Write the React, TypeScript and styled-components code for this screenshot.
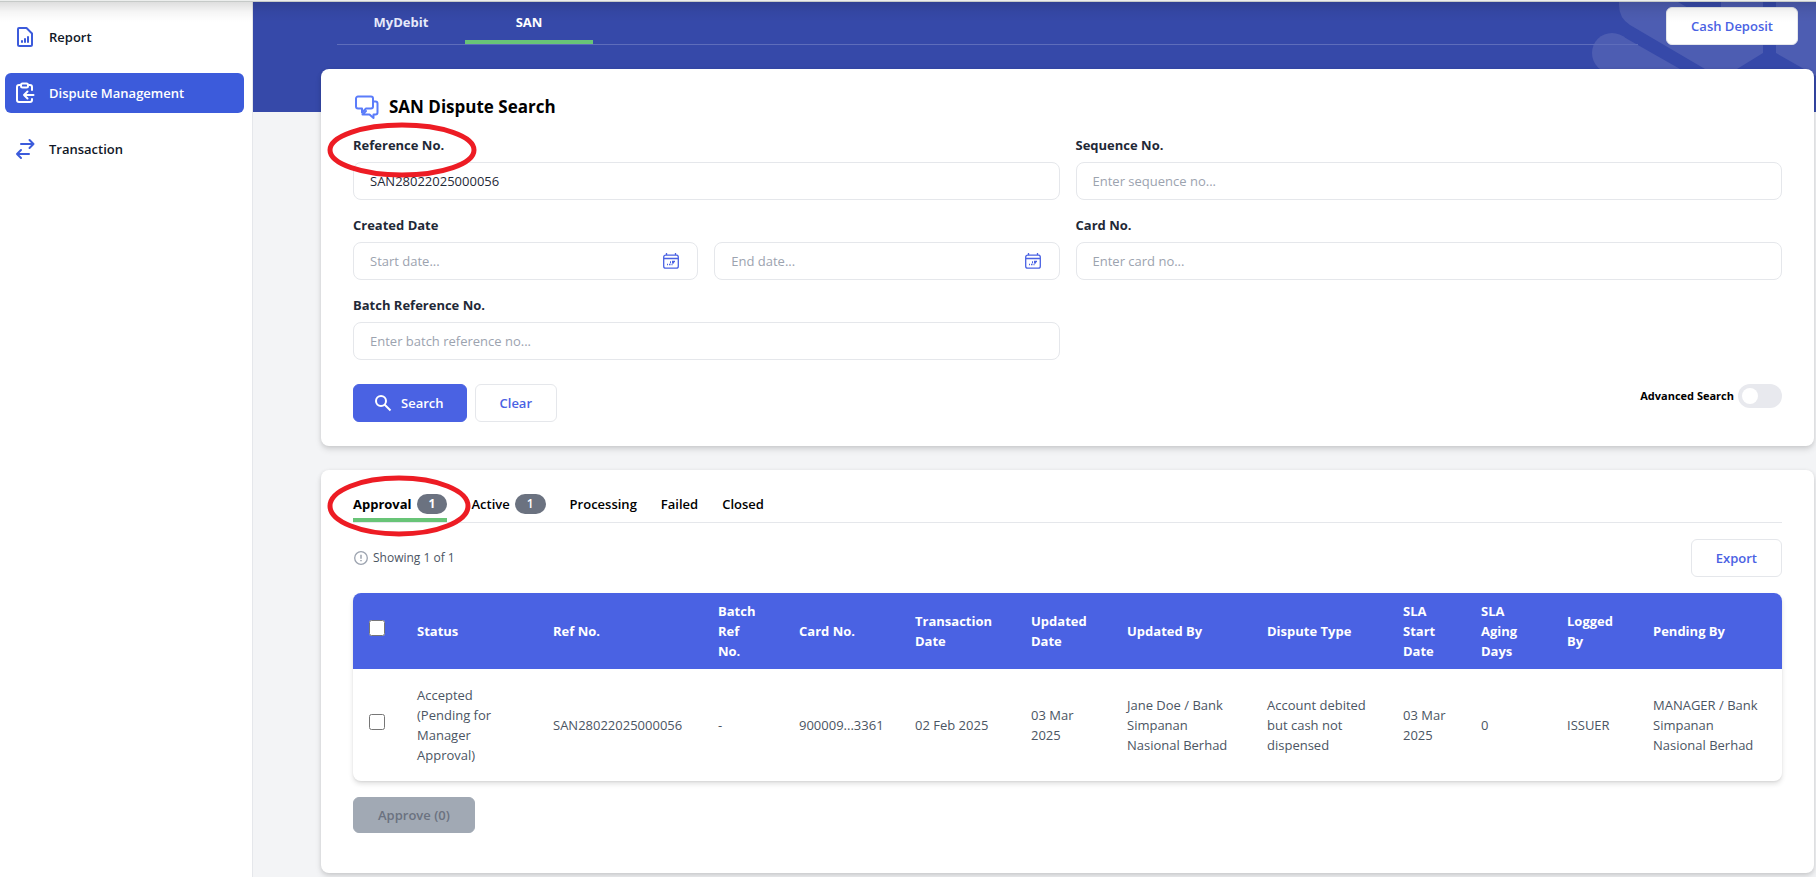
import React, { useId, useState } from 'react';
import styled, { createGlobalStyle, css } from 'styled-components';

const color = {
  brand: '#4a62e3',
  nav: '#3c5bdb',
  banner: '#3649a9',
  green: '#68c477',
  line: '#e5e7eb',
  page: '#f3f4f6',
  text: '#1f2937',
  muted: '#9ca3af',
};

const GlobalStyle = createGlobalStyle`
  *, *::before, *::after { box-sizing: border-box; }
  body {
    margin: 0;
    border-top: 1px solid #eceeed;
    background: ${color.page};
    color: #000;
    font-family: 'Segoe UI', 'Open Sans', 'Noto Sans', sans-serif;
    font-size: 13px;
    line-height: 20px;
  }
  button, input { font: inherit; color: inherit; }
`;

const Shell = styled.div`
  display: flex;
  min-height: calc(100vh - 1px);
  border-top: 1px solid #c6cac8;
  position: relative;
`;

const TopShade = styled.div`
  position: absolute;
  inset: 0 0 auto;
  height: 20px;
  background: linear-gradient(rgba(0, 0, 0, 0.13), rgba(0, 0, 0, 0.04) 50%, transparent);
  pointer-events: none;
`;

const Sidebar = styled.nav`
  flex: 0 0 253px;
  display: flex;
  flex-direction: column;
  gap: 16px;
  padding: 15px 8px 15px 5px;
  background: #fff;
  border-right: 1px solid ${color.line};
`;

const NavLink = styled.a<{ $active?: boolean }>`
  display: flex;
  align-items: center;
  gap: 12px;
  height: 40px;
  padding: 0 8px;
  border-radius: 6px;
  font-weight: 600;
  text-decoration: none;
  color: ${(p) => (p.$active ? '#fff' : '#111827')};
  background: ${(p) => (p.$active ? color.nav : 'transparent')};
  svg { color: ${(p) => (p.$active ? '#fff' : color.nav)}; }
`;

const Main = styled.main`
  flex: 1;
  min-width: 0;
  position: relative;
  padding: 0 2px 4px 68px;
`;

const Banner = styled.div`
  position: absolute;
  inset: 0 0 auto;
  height: 110px;
  overflow: hidden;
  background: ${color.banner};
  svg { position: absolute; right: 0; top: 0; }
`;

const TopBar = styled.div`
  position: relative;
  display: flex;
  align-items: flex-start;
  gap: 28px;
  height: 67px;
  padding: 0 16px;
`;

const TopTabs = styled.div`
  flex: 1;
  display: flex;
  border-bottom: 1px solid #5e6dbb;
`;

const TopTab = styled.button<{ $active?: boolean }>`
  width: 128px;
  height: 42px;
  padding: 2px 0 0;
  border: 0;
  border-bottom: 4px solid ${(p) => (p.$active ? color.green : 'transparent')};
  background: none;
  color: ${(p) => (p.$active ? '#fff' : '#e7eafa')};
  font-weight: 700;
`;

const Button = styled.button<{ $kind?: 'primary' | 'disabled' }>`
  display: inline-flex;
  align-items: center;
  justify-content: center;
  gap: 8px;
  height: 38px;
  padding: 0 24px;
  border: 1px solid ${color.line};
  border-radius: 6px;
  background: #fff;
  color: ${color.brand};
  font-weight: 600;
  ${(p) => p.$kind === 'primary' && css`
    padding: 0 22px 0 19px;
    border-color: ${color.brand};
    background: ${color.brand};
    color: #fff;
  `}
  ${(p) => p.$kind === 'disabled' && css`
    height: 36px;
    border-color: #a1a9b4;
    background: #a1a9b4;
    color: #6b7280;
  `}
`;

const CashButton = styled(Button)`
  margin-top: 5px;
`;

const Card = styled.section`
  position: relative;
  padding: 0 32px;
  border-radius: 8px;
  background: #fff;
  box-shadow: 0 4px 6px rgba(0, 0, 0, 0.1), 0 1px 4px rgba(0, 0, 0, 0.1);
  & + & { margin-top: 24px; }
`;

const SearchCard = styled(Card)`
  padding-top: 24px;
  padding-bottom: 24px;
`;

const ResultCard = styled(Card)`
  margin-top: 24px;
  padding-top: 20px;
  padding-bottom: 40px;
`;

const Title = styled.h1`
  display: flex;
  align-items: center;
  gap: 9px;
  height: 28px;
  margin: 0 0 14px;
  font-size: 17px;
  font-weight: 700;
  line-height: 28px;
  svg { color: #5b7cfa; }
`;

const Fields = styled.div`
  display: grid;
  grid-template-columns: repeat(2, minmax(0, 1fr));
  gap: 15px 16px;
`;

const Field = styled.div`
  display: flex;
  flex-direction: column;
  gap: 7px;
`;

const Label = styled.label`
  font-weight: 700;
  color: ${color.text};
`;

const InputBox = styled.input`
  width: 100%;
  height: 38px;
  padding: 0 16px;
  border: 1px solid ${color.line};
  border-radius: 8px;
  background: #fff;
  color: ${color.text};
  &::placeholder { color: ${color.muted}; opacity: 1; }
`;

const DateRow = styled.div`
  display: grid;
  grid-template-columns: repeat(2, minmax(0, 1fr));
  gap: 16px;
`;

const DateBox = styled.div`
  position: relative;
  svg {
    position: absolute;
    right: 18px;
    top: 10px;
    color: ${color.brand};
  }
`;

const Actions = styled.div`
  display: flex;
  align-items: flex-start;
  gap: 8px;
  margin-top: 24px;
`;

const Advanced = styled.label`
  display: flex;
  align-items: center;
  gap: 4px;
  margin-left: auto;
  font-size: 11px;
  font-weight: 700;
`;

const Toggle = styled.input`
  appearance: none;
  width: 44px;
  height: 24px;
  margin: 0;
  padding: 4px;
  border-radius: 12px;
  background: #e8e9ee;
  &::before {
    content: '';
    display: block;
    width: 16px;
    height: 16px;
    border-radius: 50%;
    background: #fff;
  }
  &:checked { background: ${color.brand}; }
  &:checked::before { margin-left: 20px; }
`;

const Tabs = styled.div`
  display: flex;
  gap: 24px;
  border-bottom: 1px solid ${color.line};
`;

const Tab = styled.button<{ $active?: boolean }>`
  display: flex;
  align-items: center;
  gap: 5px;
  height: 32px;
  padding: 0;
  border: 0;
  border-bottom: 4px solid ${(p) => (p.$active ? color.green : 'transparent')};
  background: none;
  font-weight: ${(p) => (p.$active ? 700 : 600)};
`;

const Count = styled.span`
  padding: 0 12px;
  border-radius: 10px;
  background: #6b7280;
  color: #fff;
  font-size: 12px;
`;

const Toolbar = styled.div`
  display: flex;
  align-items: center;
  justify-content: space-between;
  margin: 16px 0;
`;

const Showing = styled.span`
  display: flex;
  align-items: center;
  gap: 4px;
  font-size: 12px;
  color: #4b5563;
  svg { color: ${color.muted}; }
`;

const TableFrame = styled.div`
  border-radius: 8px;
  overflow: hidden;
  box-shadow: 0 3px 5px rgba(0, 0, 0, 0.12), 0 1px 2px rgba(0, 0, 0, 0.06);
`;

const Table = styled.table`
  width: 100%;
  table-layout: fixed;
  border-collapse: collapse;
  text-align: left;
  th {
    height: 76px;
    padding: 8px 20px 8px 16px;
    background: ${color.brand};
    color: #fff;
    font-weight: 700;
  }
  td {
    height: 112px;
    padding: 16px;
    color: #4b5563;
  }
`;

const Check = styled.input`
  display: block;
  width: 16px;
  height: 16px;
  margin: 0 0 6px;
`;

const Footer = styled.div`
  display: flex;
  margin-top: 16px;
`;

const Mark = styled.svg<{ $left: number; $top: number }>`
  position: absolute;
  left: ${(p) => p.$left}px;
  top: ${(p) => p.$top}px;
  pointer-events: none;
  z-index: 2;
`;

const stroke = {
  fill: 'none',
  stroke: 'currentColor',
  strokeWidth: 2,
  strokeLinecap: 'round',
  strokeLinejoin: 'round',
} as const;

const ReportIcon = () => (
  <svg width="24" height="24" viewBox="0 0 24 24" {...stroke}>
    <path d="M6 3h7.500L19 8.500V19.500a1.500 1.500 0 0 1-1.500 1.500h-11A1.500 1.500 0 0 1 5 19.500V4a1 1 0 0 1 1-1z" />
    <path d="M9 17v-1M12 17v-3M15 17v-5" />
  </svg>
);

const DisputeIcon = () => (
  <svg width="24" height="24" viewBox="0 0 24 24" {...stroke}>
    <rect x="8" y="2.500" width="7" height="4" rx="1.500" />
    <path d="M8 4H6a2 2 0 0 0-2 2v13a2 2 0 0 0 2 2h11a2 2 0 0 0 2-2v-1" />
    <path d="M15 4h2a2 2 0 0 1 2 2v3" />
    <path d="M20.500 14H11M14.500 10.500L11 14l3.500 3.500" />
  </svg>
);

const TransferIcon = () => (
  <svg width="24" height="24" viewBox="0 0 24 24" {...stroke}>
    <path d="M8 7h12.500M16.500 3l4 4-4 4M16 17H4M8 13l-4 4 4 4" />
  </svg>
);

const ChatIcon = () => (
  <svg width="27" height="26" viewBox="0 0 27 26" {...stroke}>
    <path d="M5 2.500h13a2 2 0 0 1 2 2v8a2 2 0 0 1-2 2h-5l-4 4v-4H5a2 2 0 0 1-2-2v-8a2 2 0 0 1 2-2z" />
    <path d="M20.500 7.500h2a2 2 0 0 1 2 2v9a2 2 0 0 1-2 2H20.500v3.500l-4-3.500h-7l3.500-3.500" />
  </svg>
);

const CalendarIcon = () => (
  <svg width="18" height="18" viewBox="0 0 18 18" fill="none" stroke="currentColor" strokeWidth="1.300">
    <rect x="1.700" y="3.200" width="14.600" height="13" rx="2" />
    <path d="M2 6.500h14M4.500 1v2M13.500 1v2" />
    <path d="M5 12.500h1M8 10.700h1M10 9.500h3M7 12.500h1.500M9.500 12.500h1M10 10.900h2M8 9.900h1" />
  </svg>
);

const SearchIcon = () => (
  <svg width="20" height="20" viewBox="0 0 20 20" fill="none" stroke="currentColor" strokeWidth="2">
    <circle cx="8" cy="8" r="5" />
    <path d="M11.500 11.500L17.500 17.500" />
  </svg>
);

const InfoIcon = () => (
  <svg width="16" height="16" viewBox="0 0 16 16" fill="none" stroke="currentColor" strokeWidth="1.300">
    <circle cx="8" cy="8" r="6.300" />
    <path d="M8 4.800v4M8 10v1.300" strokeWidth="1.500" />
  </svg>
);

const BannerArt = () => (
  <svg width="240" height="110" viewBox="0 0 240 110" fill="#4d5db2">
    <path d="M43 -10V3Q43 16 54 23L129 67H161L187 51V-10H145V25L102 0L85 -10z" />
    <path d="M200 -10V51L228 67L240 74V-10z" />
    <circle cx="36" cy="51" r="20" />
    <path d="M46 34L104 67V71H36V51z" />
  </svg>
);

type TextFieldProps = { label: string; placeholder?: string; defaultValue?: string };

const TextField = ({ label, placeholder, defaultValue }: TextFieldProps) => {
  const id = useId();
  return (
    <Field>
      <Label htmlFor={id}>{label}</Label>
      <InputBox id={id} type="text" placeholder={placeholder} defaultValue={defaultValue} />
    </Field>
  );
};

const columns: { title: string; value: string; width: number }[] = [
  { title: 'Status', value: 'Accepted (Pending for Manager Approval)', width: 136 },
  { title: 'Ref No.', value: 'SAN28022025000056', width: 165 },
  { title: 'Batch Ref No.', value: '-', width: 81 },
  { title: 'Card No.', value: '900009...3361', width: 116 },
  { title: 'Transaction Date', value: '02 Feb 2025', width: 116 },
  { title: 'Updated Date', value: '03 Mar 2025', width: 96 },
  { title: 'Updated By', value: 'Jane Doe / Bank Simpanan Nasional Berhad', width: 140 },
  { title: 'Dispute Type', value: 'Account debited but cash not dispensed', width: 136 },
  { title: 'SLA Start Date', value: '03 Mar 2025', width: 78 },
  { title: 'SLA Aging Days', value: '0', width: 86 },
  { title: 'Logged By', value: 'ISSUER', width: 86 },
  { title: 'Pending By', value: 'MANAGER / Bank Simpanan Nasional Berhad', width: 145 },
];

const Col = styled.col<{ $width: number }>`
  width: ${(p) => p.$width}px;
`;

const resultTabs = [
  { name: 'Approval', count: 1 },
  { name: 'Active', count: 1 },
  { name: 'Processing' },
  { name: 'Failed' },
  { name: 'Closed' },
];

export default function App() {
  const [tab, setTab] = useState('Approval');
  return (
    <>
      <GlobalStyle />
      <Shell>
        <Sidebar>
          <NavLink href="#report"><ReportIcon />Report</NavLink>
          <NavLink href="#dispute" $active><DisputeIcon />Dispute Management</NavLink>
          <NavLink href="#transaction"><TransferIcon />Transaction</NavLink>
        </Sidebar>
        <Main>
          <Banner><BannerArt /></Banner>
          <TopBar>
            <TopTabs>
              <TopTab type="button">MyDebit</TopTab>
              <TopTab type="button" $active>SAN</TopTab>
            </TopTabs>
            <CashButton type="button">Cash Deposit</CashButton>
          </TopBar>

          <SearchCard>
            <Mark $left={5} $top={52} width="152" height="58" viewBox="0 0 152 58">
              <ellipse cx="76" cy="29" rx="72" ry="25" fill="none" stroke="#ed1c24" strokeWidth="5" />
            </Mark>
            <Title><ChatIcon />SAN Dispute Search</Title>
            <Fields>
              <TextField label="Reference No." defaultValue="SAN28022025000056" />
              <TextField label="Sequence No." placeholder="Enter sequence no..." />
              <Field>
                <Label htmlFor="start-date">Created Date</Label>
                <DateRow>
                  <DateBox>
                    <InputBox id="start-date" type="text" placeholder="Start date..." />
                    <CalendarIcon />
                  </DateBox>
                  <DateBox>
                    <InputBox aria-label="End date" type="text" placeholder="End date..." />
                    <CalendarIcon />
                  </DateBox>
                </DateRow>
              </Field>
              <TextField label="Card No." placeholder="Enter card no..." />
              <TextField label="Batch Reference No." placeholder="Enter batch reference no..." />
            </Fields>
            <Actions>
              <Button type="button" $kind="primary"><SearchIcon />Search</Button>
              <Button type="button">Clear</Button>
              <Advanced>
                Advanced Search
                <Toggle type="checkbox" />
              </Advanced>
            </Actions>
          </SearchCard>

          <ResultCard>
            <Mark $left={5} $top={5} width="146" height="62" viewBox="0 0 146 62">
              <ellipse cx="73" cy="31" rx="69" ry="28" fill="none" stroke="#ed1c24" strokeWidth="5" />
            </Mark>
            <Tabs>
              {resultTabs.map((t) => (
                <Tab key={t.name} type="button" $active={t.name === tab} onClick={() => setTab(t.name)}>
                  {t.name}
                  {t.count !== undefined && <Count>{t.count}</Count>}
                </Tab>
              ))}
            </Tabs>
            <Toolbar>
              <Showing><InfoIcon />Showing 1 of 1</Showing>
              <Button type="button">Export</Button>
            </Toolbar>
            <TableFrame>
              <Table>
                <colgroup>
                  <Col $width={48} />
                  {columns.map((c) => <Col key={c.title} $width={c.width} />)}
                </colgroup>
                <thead>
                  <tr>
                    <th><Check type="checkbox" aria-label="Select all" /></th>
                    {columns.map((c) => <th key={c.title}>{c.title}</th>)}
                  </tr>
                </thead>
                <tbody>
                  <tr>
                    <td><Check type="checkbox" aria-label="Select row" /></td>
                    {columns.map((c) => <td key={c.title}>{c.value}</td>)}
                  </tr>
                </tbody>
              </Table>
            </TableFrame>
            <Footer>
              <Button type="button" $kind="disabled" disabled>Approve (0)</Button>
            </Footer>
          </ResultCard>
        </Main>
        <TopShade />
      </Shell>
    </>
  );
}
